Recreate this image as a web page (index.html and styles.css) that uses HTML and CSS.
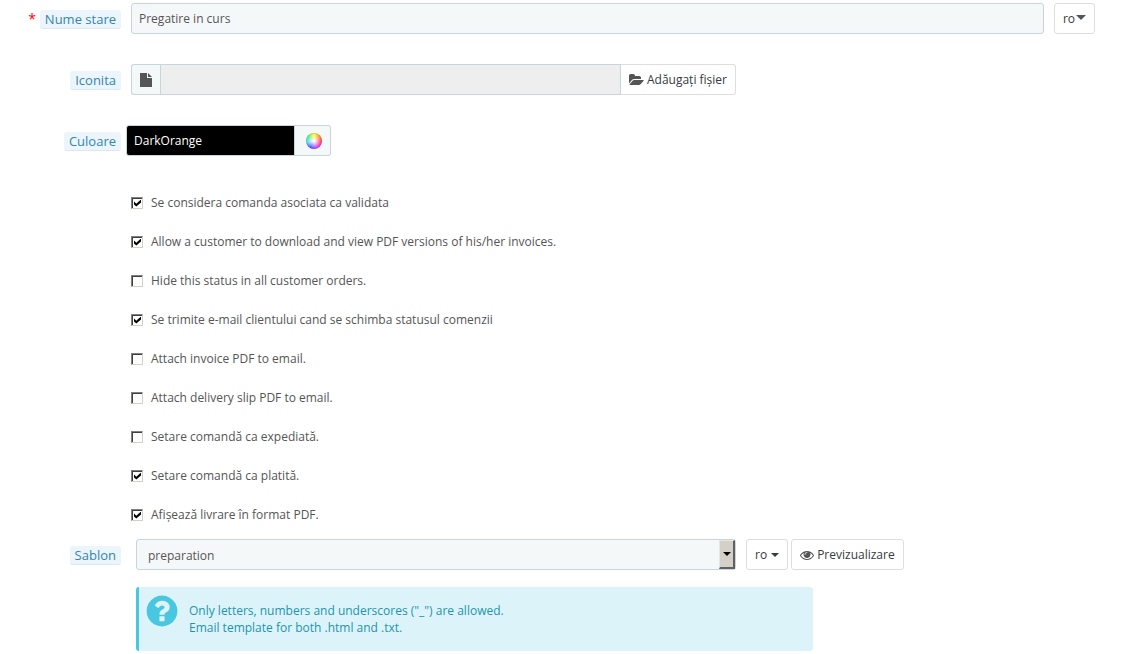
FILE: index.html
```html
<!DOCTYPE html>
<html lang="ro">
<head>
    <meta charset="UTF-8">
    <meta name="viewport" content="width=device-width, initial-scale=1.0">
    <title>Stare comanda</title>
    <link rel="stylesheet" href="styles.css">
</head>
<body>
    <form class="statusForm">
        <div class="formRow">
            <div class="labelCol required"><label class="fieldLabel" for="name">Nume stare</label></div>
            <div class="fieldCol">
                <input class="textInput" id="name" type="text" value="Pregatire in curs">
                <button class="btn langButton" type="button">ro<span class="caret bigCaret"></span></button>
            </div>
        </div>

        <div class="formRow">
            <div class="labelCol"><label class="fieldLabel" for="icon">Iconita</label></div>
            <div class="fieldCol">
                <div class="inputGroup fileGroup">
                    <span class="addon">
                        <svg width="12" height="14" viewBox="0 0 12 14"><path d="M0 0h7v5h5v9H0z"/><path d="M8 0l4 4H8z"/></svg>
                    </span>
                    <input class="textInput" id="icon" type="text" readonly>
                    <button class="btn" type="button">
                        <svg width="15" height="14" viewBox="0 0 1920 1792"><path d="M1879 952q0 31-31 66l-336 396q-43 51-120.5 86.5t-143.5 35.5h-1088q-34 0-60.5-13t-26.5-43q0-31 31-66l336-396q43-51 120.5-86.5t143.5-35.5h1088q34 0 60.5 13t26.5 43zm-343-344v160h-832q-94 0-197 47.5t-164 119.5l-337 396-5 6q0-4-.5-12.5t-.5-12.5v-960q0-92 66-158t158-66h320q92 0 158 66t66 158v32h544q92 0 158 66t66 158z"/></svg>
                        Adăugați fișier
                    </button>
                </div>
            </div>
        </div>

        <div class="formRow">
            <div class="labelCol"><label class="fieldLabel" for="color">Culoare</label></div>
            <div class="fieldCol colorCol">
                <div class="inputGroup colorGroup">
                    <input class="textInput colorInput" id="color" type="text" value="DarkOrange">
                    <button class="addon colorButton" type="button" aria-label="Culoare"><span class="colorWheel"></span></button>
                </div>
            </div>
        </div>

        <div class="checkList">
            <label class="check"><input type="checkbox" checked>Se considera comanda asociata ca validata</label>
            <label class="check"><input type="checkbox" checked>Allow a customer to download and view PDF versions of his/her invoices.</label>
            <label class="check"><input type="checkbox">Hide this status in all customer orders.</label>
            <label class="check"><input type="checkbox" checked>Se trimite e-mail clientului cand se schimba statusul comenzii</label>
            <label class="check"><input type="checkbox">Attach invoice PDF to email.</label>
            <label class="check"><input type="checkbox">Attach delivery slip PDF to email.</label>
            <label class="check"><input type="checkbox">Setare comandă ca expediată.</label>
            <label class="check"><input type="checkbox" checked>Setare comandă ca platită.</label>
            <label class="check"><input type="checkbox" checked>Afișează livrare în format PDF.</label>
        </div>

        <div class="formRow">
            <div class="labelCol"><label class="fieldLabel" for="template">Sablon</label></div>
            <div class="fieldCol templateCol">
                <div class="selectBox">
                    <select class="textInput" id="template">
                        <option>preparation</option>
                    </select>
                    <span class="selectArrow"><span class="caret"></span></span>
                </div>
                <div class="buttons">
                    <button class="btn" type="button">ro <span class="caret"></span></button>
                    <button class="btn" type="button">
                        <svg width="14" height="14" viewBox="0 0 1792 1792"><path d="M1664 960q-152-236-381-353 61 104 61 225 0 185-131.5 316.5t-316.5 131.5-316.5-131.5-131.5-316.5q0-121 61-225-229 117-381 353 133 205 333.5 326.5t434.5 121.5 434.5-121.5 333.5-326.5zm-720-384q0-20-14-34t-34-14q-125 0-214.5 89.5t-89.5 214.5q0 20 14 34t34 14 34-14 14-34q0-86 61-147t147-61q20 0 34-14t14-34zm848 384q0 34-20 69-140 230-376.5 368.5t-499.5 138.5-499.5-139-376.5-368q-20-35-20-69t20-69q140-229 376.5-368t499.5-139 499.5 139 376.5 368q20 35 20 69z"/></svg>
                        Previzualizare
                    </button>
                </div>
            </div>
        </div>

        <div class="helpBox">
            <svg width="36" height="36" viewBox="0 0 1792 1792"><path d="M1024 1376v-192q0-14-9-23t-23-9h-192q-14 0-23 9t-9 23v192q0 14 9 23t23 9h192q14 0 23-9t9-23zm256-672q0-88-55.5-163t-138.5-116-170-41q-243 0-371 213-15 24 8 42l132 100q7 6 19 6 16 0 25-12 53-68 86-92 34-24 86-24 48 0 85.5 26t37.5 59q0 38-20 61t-68 45q-63 28-115.5 86.5t-52.5 125.5v36q0 14 9 23t23 9h192q14 0 23-9t9-23q0-19 21.5-49.5t54.5-49.5q32-18 49-28.5t46-35 44.5-48 28-60.5 12.5-81zm384 192q0 209-103 385.5t-279.5 279.5-385.5 103-385.5-103-279.5-279.5-103-385.5 103-385.5 279.5-279.5 385.5-103 385.5 103 279.5 279.5 103 385.5z"/></svg>
            <p>Only letters, numbers and underscores ("_") are allowed.<br>Email template for both .html and .txt.</p>
        </div>
    </form>
</body>
</html>
```
FILE: styles.css
```css
* {
    box-sizing: border-box;
}

body {
    margin: 0;
    background-color: #fff;
    color: #555;
    font-family: "Open Sans", "Noto Sans", sans-serif;
    font-size: 12px;
    line-height: 17px;
}

input,
select,
button {
    font: inherit;
    margin: 0;
}

svg {
    fill: currentColor;
    flex: none;
}

.statusForm {
    padding: 3px 34px 3px 0;
}

.formRow {
    display: grid;
    grid-template-columns: 121px 1fr;
    column-gap: 10px;
    align-items: center;
    margin-bottom: 30px;
}

.labelCol {
    display: flex;
    justify-content: flex-end;
    padding-top: 2px;
}

.required::before {
    content: "*";
    color: #f00;
    font-size: 14px;
    margin-right: 4px;
}

.fieldLabel {
    padding: 0 5px;
    border-radius: 3px;
    background-color: #ebf5fb;
    border-bottom: 1px solid #d7eaf5;
    color: #3586ae;
    font-size: 13px;
    line-height: 18px;
}

.fieldCol {
    display: flex;
    gap: 10px;
}

.textInput {
    flex: 1;
    min-width: 0;
    width: 100%;
    height: 31px;
    padding: 0 7px;
    border: 1px solid #c7d6db;
    border-radius: 3px;
    background-color: #f5f8f9;
    color: #555;
}

.textInput:read-only:not(select) {
    background-color: #eee;
}

.btn {
    display: flex;
    align-items: center;
    gap: 3px;
    height: 31px;
    padding: 0 8px;
    border: 1px solid #dedede;
    border-radius: 3px;
    background-color: #fff;
    color: #363a41;
    white-space: nowrap;
    cursor: pointer;
}

.btn svg {
    color: #555;
}

.caret {
    border: 4px solid transparent;
    border-top-color: currentColor;
    border-bottom: 0;
    margin-left: 1px;
}

.langButton {
    gap: 1px;
}

.bigCaret {
    border-width: 5px 5px 0;
    margin: 0 0 2px;
    color: #555;
}

.inputGroup {
    display: flex;
    width: 100%;
}

.fileGroup {
    max-width: 605px;
}

.inputGroup .textInput {
    border-radius: 0;
}

.inputGroup .btn {
    border-left: 0;
    border-radius: 0 3px 3px 0;
}

.addon {
    display: flex;
    align-items: center;
    justify-content: center;
    width: 29px;
    height: 31px;
    border: 1px solid #c7d6db;
    border-right: 0;
    border-radius: 3px 0 0 3px;
    background-color: #f5f8f9;
}

.colorCol {
    margin-left: -5px;
}

.colorGroup {
    max-width: 205px;
}

.inputGroup .colorInput {
    border-radius: 3px 0 0 3px;
    background-color: #000;
    color: #fff;
}

.colorButton {
    width: 36px;
    padding: 0 0 0 2px;
    border: 1px solid #c7d6db;
    border-left: 0;
    border-radius: 0 3px 3px 0;
}

.colorWheel {
    width: 16px;
    height: 16px;
    border-radius: 50%;
    background: radial-gradient(circle, #fff 5%, transparent 75%),
        conic-gradient(#ff0 0deg, #f80 45deg, #f24 90deg, #f0c 130deg, #83f 170deg, #33f 210deg, #3cf 260deg, #3e6 310deg, #ff0 360deg);
    box-shadow: inset 0 0 1px #555;
}

.checkList {
    margin: -3px 0 5px 131px;
}

.check {
    display: flex;
    align-items: center;
    gap: 8px;
    width: fit-content;
    height: 39px;
}

.check input {
    appearance: none;
    display: grid;
    place-items: center;
    width: 12px;
    height: 12px;
    padding: 1px 0 0 1px;
    border: 1px solid #d4d0c8;
    border-top-color: #808080;
    border-left-color: #808080;
    background-color: #fff;
    box-shadow: inset 1px 1px #404040;
}

.check input:checked::before {
    content: "";
    width: 7px;
    height: 7px;
    background-color: #000;
    clip-path: polygon(0 29%, 33% 60%, 100% 0, 100% 43%, 33% 100%, 0 72%);
}

.templateCol {
    padding-left: 5px;
}

.selectBox {
    position: relative;
    flex: 0 1 600px;
}

.selectBox .textInput {
    appearance: none;
    padding: 2px 11px 0;
}

/* old style drop-down button, drawn over the select */
.selectArrow {
    position: absolute;
    top: 1px;
    right: 1px;
    bottom: 1px;
    display: flex;
    align-items: center;
    justify-content: center;
    width: 16px;
    border: 1px solid #e8e5df;
    border-right: 2px solid #606060;
    border-bottom: 2px solid #606060;
    background-color: #d4d0c8;
    color: #000;
    pointer-events: none;
}

.selectArrow .caret {
    margin: 0;
}

.buttons {
    display: flex;
    gap: 3px;
}

.helpBox {
    display: flex;
    align-items: flex-start;
    gap: 9px;
    max-width: 677px;
    min-height: 64px;
    margin: -13px 0 0 136px;
    padding: 6px 5px;
    border-left: 3px solid #4ac7e0;
    border-radius: 3px;
    background-color: #dcf4f9;
    color: #1e94ab;
}

.helpBox svg {
    color: #4ac7e0;
}

.helpBox p {
    margin: 9px 0 0;
}
```
